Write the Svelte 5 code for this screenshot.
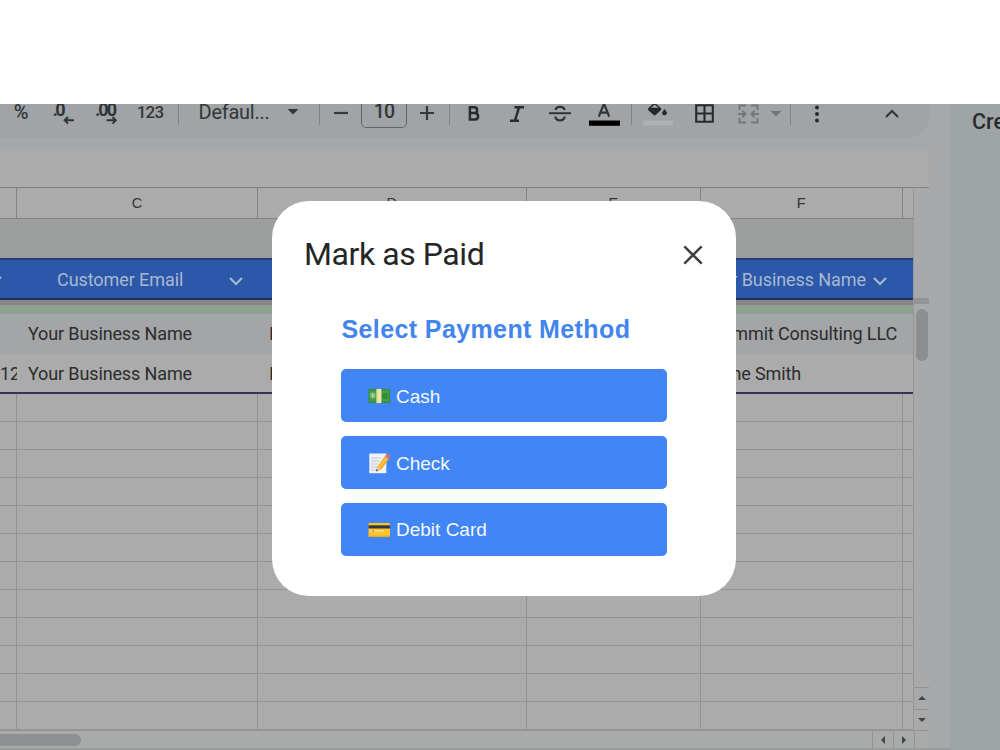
<script>
  const emptyRows = Array.from({ length: 12 });
  const methods = [
    { id: 'cash', label: 'Cash' },
    { id: 'check', label: 'Check' },
    { id: 'card', label: 'Debit Card' }
  ];
</script>

{#snippet caret()}
  <svg width="12" height="6" viewBox="0 0 12 6"><path d="M0.5 0h11L6 5.6z" fill="currentColor" /></svg>
{/snippet}

{#snippet chevron()}
  <svg width="14" height="9" viewBox="0 0 14 9"><path d="M1 1l6 6 6-6" fill="none" stroke="currentColor" stroke-width="2.1" /></svg>
{/snippet}

{#snippet emoji(id)}
  <svg class="emoji" width="22" height="22" viewBox="0 0 22 22">
    {#if id === 'cash'}
      <rect x="0.5" y="4" width="21.5" height="14" rx="0.6" fill="#2f8d3c" />
      <rect x="1.5" y="5.2" width="19.3" height="11.3" fill="#43a047" />
      <circle cx="4.8" cy="10.6" r="3" fill="#78b96f" />
      <path d="M4 8.5h1.6v4H4z" fill="#b7d59c" />
      <circle cx="17" cy="11" r="3" fill="#348b38" />
      <rect x="8.6" y="4" width="4.8" height="14" fill="#f1e5a5" />
      <path d="M8.6 4h1v14h-1z" fill="#cfd98b" />
    {:else if id === 'check'}
      <rect x="1.3" y="1.5" width="17" height="19.7" fill="#eef3f7" />
      <path d="M3 6h10M3 9h9M3 12h7M3 15h6M3 18h5" stroke="#aebdc9" stroke-width="0.8" />
      <path d="M8 19.5l1.5-5L17 4l4 3-7.6 10.4z" fill="#f9ad24" />
      <path d="M10.8 15.2l7.8-10 1 .8-7.7 10z" fill="#ffd04a" />
      <path d="M8 19.5l1.5-5 3.9 2.9z" fill="#edc39a" />
      <path d="M8 19.5l.7-2.4 1.5 1.2z" fill="#424242" />
      <path d="M17 4l1.2-1.6q1-1 2.8.2t1.2 2.7L21 7z" fill="#e96773" />
      <path d="M16.2 5.1L17 4l4 3-.9 1.1z" fill="#9dacb5" />
    {:else}
      <rect x="0.5" y="4" width="21.5" height="14" rx="1.2" fill="#ffc42d" />
      <rect x="0.5" y="6.3" width="21.5" height="3.2" fill="#343b3c" />
      <rect x="2" y="11" width="13.6" height="1.5" fill="#ffe08a" />
      <path d="M4 11h2.3L5.1 14z" fill="#e69325" />
      <path d="M0.5 16.5H22v.4q0 1.1-1.2 1.1H1.7Q.5 18 .5 16.9z" fill="#eba925" />
    {/if}
  </svg>
{/snippet}

<div class="page">
  <div class="blank"></div>
  <div class="workspace">
    <main>
      <div class="toolbar">
        <div class="tool pct">%</div>
        <div class="tool">
          <svg width="26" height="26" viewBox="0 0 26 26"><text x="2.5" y="14.7" class="dec" textLength="13">.0</text><path d="M24 19.3h-9M18 16l-3.3 3.3 3.3 3.3" class="arrow" /></svg>
        </div>
        <div class="tool">
          <svg width="26" height="26" viewBox="0 0 26 26"><text x="2" y="14.7" class="dec" textLength="22">.00</text><path d="M13.5 19.3h9M19.5 16l3.3 3.3-3.3 3.3" class="arrow" /></svg>
        </div>
        <div class="tool num">123</div>
        <div class="tool"><i class="sep"></i></div>
        <div class="tool family">Defaul...</div>
        <div class="tool caret">{@render caret()}</div>
        <div class="tool"><i class="sep"></i></div>
        <div class="tool up"><svg width="14" height="14" viewBox="0 0 14 14"><path d="M0 7h14" stroke="#363a3d" stroke-width="2.2" /></svg></div>
        <div class="tool"><span class="size">10</span></div>
        <div class="tool up"><svg width="14" height="14" viewBox="0 0 14 14"><path d="M0 7h14M7 0v14" stroke="#363a3d" stroke-width="2.2" /></svg></div>
        <div class="tool"><i class="sep"></i></div>
        <div class="tool"><svg width="12" height="15" viewBox="0 0 12 15"><path d="M1.9 1.3h4.2q3 0 3 2.9T6.1 7.1H1.9zM1.9 7.1h5q3.2 0 3.2 3.2T6.9 13.6h-5z" fill="none" stroke="#272b2e" stroke-width="2.5" /></svg></div>
        <div class="tool"><svg width="14" height="16" viewBox="0 0 14 16"><path d="M4.5 1.3H14M0 14.7h9M9 1.5L5 14.5" fill="none" stroke="#272b2e" stroke-width="2.5" /></svg></div>
        <div class="tool"><svg width="22" height="18" viewBox="0 0 22 18"><path d="M0 8.2h22" stroke="#303437" stroke-width="2" /><path d="M15.5 5Q15 1.8 11 1.8T6.6 5M6.2 11.6Q7 15.4 11 15.4t4.8-3.8" fill="none" stroke="#303437" stroke-width="2.2" /></svg></div>
        <div class="tool"><svg width="31" height="26" viewBox="0 0 31 26"><path d="M9.8 15.7L15 2.7l5.2 13M11.5 11.7h7" fill="none" stroke="#303437" stroke-width="2.2" /><path d="M0 19.5h31v5.3H0z" fill="#000" /></svg></div>
        <div class="tool"><i class="sep"></i></div>
        <div class="tool"><svg width="30" height="26" viewBox="0 0 30 26"><path d="M5.3 7.3l6.2-6 6.5 6q.5 1 0 1.8L12.7 14q-1 .6-2 0L5.3 9.2q-.6-1 0-1.9z" fill="#25292b" /><path d="M8 6.8h7.5L11.7 3.4z" fill="#a0a4a6" /><path d="M21.5 8.6q4 5.2 0 5.2t0-5.2z" fill="#25292b" stroke="#25292b" /><path d="M0 19.5h30v5H0z" fill="#aeb0b1" /></svg></div>
        <div class="tool"><svg width="19" height="19" viewBox="0 0 19 19"><path d="M1.2 1.2h16.6v16.6H1.2zM9.5 1v17M1 9.5h17" fill="none" stroke="#272b2d" stroke-width="2.1" /></svg></div>
        <div class="tool"><svg width="21" height="20" viewBox="0 0 21 20"><path d="M8 1.5H1.5V6M13 1.5h6.5V6M8 18.5H1.5V14M13 18.5h6.5V14M0 10h7M4.3 6.8L7.5 10l-3.2 3.2M21 10h-7M16.7 6.8L13.5 10l3.2 3.2" fill="none" stroke="#73787a" stroke-width="2" /></svg></div>
        <div class="tool muted">{@render caret()}</div>
        <div class="tool"><i class="sep"></i></div>
        <div class="tool"><svg width="6" height="18" viewBox="0 0 6 18"><g fill="#26292c"><circle cx="3" cy="2.6" r="2" /><circle cx="3" cy="9" r="2" /><circle cx="3" cy="15.4" r="2" /></g></svg></div>
        <div></div>
        <div class="tool"><svg width="14" height="9" viewBox="0 0 14 9"><path d="M1 8l6-6 6 6" fill="none" stroke="#303437" stroke-width="2" /></svg></div>
      </div>
      <div class="formula"></div>
      <div class="sheet">
        <div class="cells">
          <div class="row letters"><span></span><span>C</span><span>D</span><span>E</span><span>F</span><span></span></div>
          <div class="band"></div>
          <div class="table-head">
            <div class="edge">{@render chevron()}</div>
            <div class="head-c"><span>Customer Email</span>{@render chevron()}</div>
            <div></div>
            <div></div>
            <div class="head-f"><span>Your Business Name</span>{@render chevron()}</div>
          </div>
          <div class="frozen"></div>
          <div class="green"></div>
          <div class="record tinted"><span></span><span class="name">Your Business Name</span><span class="name">Invoice</span><span></span><span class="client one">Summit Consulting LLC</span></div>
          <div class="record last"><span class="id">12</span><span class="name">Your Business Name</span><span class="name">Invoice</span><span></span><span class="client two">Jane Smith</span></div>
          {#each emptyRows as _}
            <div class="row empty"><span></span><span></span><span></span><span></span><span></span><span></span></div>
          {/each}
        </div>
        <div class="vscroll">
          <div class="vtop"></div>
          <div class="vbar"></div>
          <div class="vtrack"><div class="vthumb"></div></div>
          <div class="step"><svg width="8" height="4" viewBox="0 0 8 4"><path d="M0 4l4-4 4 4z" fill="#424446" /></svg></div>
          <div class="step"><svg width="8" height="4" viewBox="0 0 8 4"><path d="M0 0l4 4 4-4z" fill="#424446" /></svg></div>
        </div>
      </div>
      <div class="hscroll">
        <div class="hthumb"></div>
        <div class="hstep"><svg width="4" height="8" viewBox="0 0 4 8"><path d="M4 0L0 4l4 4z" fill="#424446" /></svg></div>
        <div class="hstep"><svg width="4" height="8" viewBox="0 0 4 8"><path d="M0 0l4 4-4 4z" fill="#424446" /></svg></div>
        <div class="corner"></div>
      </div>
      <div class="foot"></div>
    </main>
    <aside>Create</aside>
  </div>

  <div class="modal">
    <header>
      <h1>Mark as Paid</h1>
      <svg width="20" height="20" viewBox="0 0 20 20"><path d="M1.3 1.3l17.4 17.4M18.7 1.3L1.3 18.7" stroke="#3f4245" stroke-width="2.6" /></svg>
    </header>
    <h2>Select Payment Method</h2>
    <div class="methods">
      {#each methods as m}
        <button>{@render emoji(m.id)}<span>{m.label}</span></button>
      {/each}
    </div>
  </div>
</div>

<style>
  :global(body) { margin: 0; background: #fff; overflow: hidden; }
  .page { position: relative; width: 1000px; height: 750px; overflow: hidden; font-family: Roboto, sans-serif; }
  .page, .page * { box-sizing: border-box; }
  svg { display: block; flex: none; }
  .blank { height: 104px; background: #fff; }
  .workspace { display: flex; height: 646px; overflow: hidden; background: #a6a8aa; }
  main { width: 950px; flex: none; }
  aside { width: 50px; overflow: hidden; background: #9fa4a7; padding: 4px 0 0 22px; font: 500 21.5px/28px Roboto, sans-serif; color: #292c2f; white-space: nowrap; }
  .toolbar {
    display: grid; width: 930px; height: 49px; margin-top: -15px;
    grid-template-columns: 42px 42px 44px 44px 12px 86px 46px 6px 38px 48px 38px 6px 44px 42px 44px 44px 10px 44px 48px 40px 16px 12px 42px 16px 76px;
    background: #a0a4a7; border-radius: 0 0 24px 0;
  }
  .tool { display: flex; align-items: center; justify-content: center; color: #33373a; }
  .tool svg { overflow: visible; }
  .tool.muted { color: #707578; }
  .tool.caret { padding-bottom: 3px; }
  .tool.up { padding-bottom: 2px; }
  .pct { font-size: 20px; font-weight: 500; padding-bottom: 3px; }
  .num { font-size: 17px; font-weight: 500; letter-spacing: -.8px; padding-bottom: 4px; }
  .family { justify-content: flex-start; padding: 0 0 3px 14.5px; font-size: 20px; font-weight: 450; letter-spacing: -.25px; white-space: nowrap; }
  .dec { font: 700 18px Roboto, sans-serif; fill: #303437; }
  .arrow { fill: none; stroke: #303437; stroke-width: 2; }
  .sep { width: 1px; height: 23px; background: #808487; }
  .size { width: 46px; height: 32px; margin-bottom: 3px; border: 1.5px solid #606467; border-radius: 5px; text-align: center; font-size: 19.5px; font-weight: 500; letter-spacing: -.8px; line-height: 30px; flex: none; }
  .formula { width: 929px; height: 49px; background: linear-gradient(#a6a8aa 0 10px, #ababab 15px); }
  .sheet { display: flex; width: 929px; height: 543px; }
  .cells { width: 913px; flex: none; overflow: hidden; background: #ababab; }
  .row { display: grid; grid-template-columns: 17px 241px 268.5px 174.5px 201.5px 10.5px; }
  .row span { border-right: 1px solid #929292; border-bottom: 1px solid #949494; }
  .row span:last-child { border-right: 0; }
  .letters { height: 32px; border-top: 1px solid #818181; }
  .letters span { border-color: #838383; text-align: center; font: 14.5px/30px "Liberation Sans", sans-serif; color: #323436; }
  .band { height: 39px; background: #9d9f9f; }
  .table-head { display: grid; grid-template-columns: 17px 241px 269px 174px 212px; height: 42px; border-top: 2px solid #253972; border-bottom: 2px solid #26305e; background: #2b58a9; color: #a9b7d2; font-size: 18px; letter-spacing: -.08px; line-height: 38px; white-space: nowrap; }
  .edge { overflow: hidden; padding: 16px 0 0; }
  .edge svg { margin-left: -12px; }
  .head-c, .head-f { display: flex; align-items: center; justify-content: space-between; }
  .head-c { padding: 0 15px 0 40px; }
  .head-f { justify-content: flex-end; gap: 7px; padding-right: 26px; }
  .head-c svg, .head-f svg { margin-top: 4px; }
  .head-c span, .head-f span { margin-top: 1px; }
  .frozen { height: 5px; background: linear-gradient(#898489, #858585); }
  .green { height: 9px; background: #8da390; }
  .record { display: grid; grid-template-columns: 17px 241px 269px 174px 212px; height: 40px; line-height: 39px; font-size: 18px; letter-spacing: -.13px; color: #2b2c2d; white-space: nowrap; }
  .tinted { background: #a3a5a6; }
  .last { border-bottom: 2px solid #373355; }
  .record span { overflow: hidden; }
  .name { padding-left: 11px; }
  .client { text-align: right; }
  .one { padding-right: 16px; }
  .two { padding-right: 112px; }
  .row.empty { height: 28px; }
  .vscroll { width: 16px; display: flex; flex-direction: column; border-top: 1px solid #818181; border-left: 1px solid #979797; background: #a8a9aa; }
  .vtop { height: 110px; }
  .vbar { height: 6px; background: #929495; flex: none; }
  .vtrack { flex: 1; padding: 5px 2px; }
  .vthumb { height: 52px; width: 12px; border-radius: 6px; background: #8c8e8f; }
  .step { display: flex; align-items: center; justify-content: center; height: 21.5px; border-top: 1px solid #929292; }
  .hscroll { display: flex; width: 929px; height: 18px; border-top: 1px solid #929292; background: #a9aaaa; }
  .hthumb { width: 81px; height: 12px; margin: 3px 791px 0 0; background: #8d8f91; border-radius: 0 6px 6px 0; flex: none; }
  .hstep { display: flex; align-items: center; justify-content: center; width: 21px; border-left: 1px solid #929292; }
  .corner { width: 15px; border-left: 1px solid #929292; }
  .foot { height: 3px; background: #999b9c; }
  .modal { position: absolute; left: 272px; top: 201px; width: 464px; height: 395px; border-radius: 37px; background: #fff; padding: 32px 32px 0; }
  header { display: flex; align-items: center; justify-content: space-between; height: 43px; padding-right: 1px; }
  h1 { margin: -2px 0 0; font: 400 32px/42px Roboto, sans-serif; letter-spacing: -.43px; color: #242628; white-space: nowrap; }
  h2 { margin: 37px 0 0 37.5px; font: 700 25px/32px "Liberation Sans", sans-serif; letter-spacing: .39px; color: #4385ed; white-space: nowrap; }
  .methods { display: flex; flex-direction: column; gap: 13.5px; padding: 24.3px 37px 0; }
  button { display: flex; align-items: center; width: 326px; height: 53.2px; border: 0; border-radius: 5px; background: #4285f4; padding: 2px 27px 0; gap: 6px; color: #f4f8ff; font: 19px/24px "Liberation Sans", sans-serif; }
  button .emoji { margin-top: -1px; }
</style>
